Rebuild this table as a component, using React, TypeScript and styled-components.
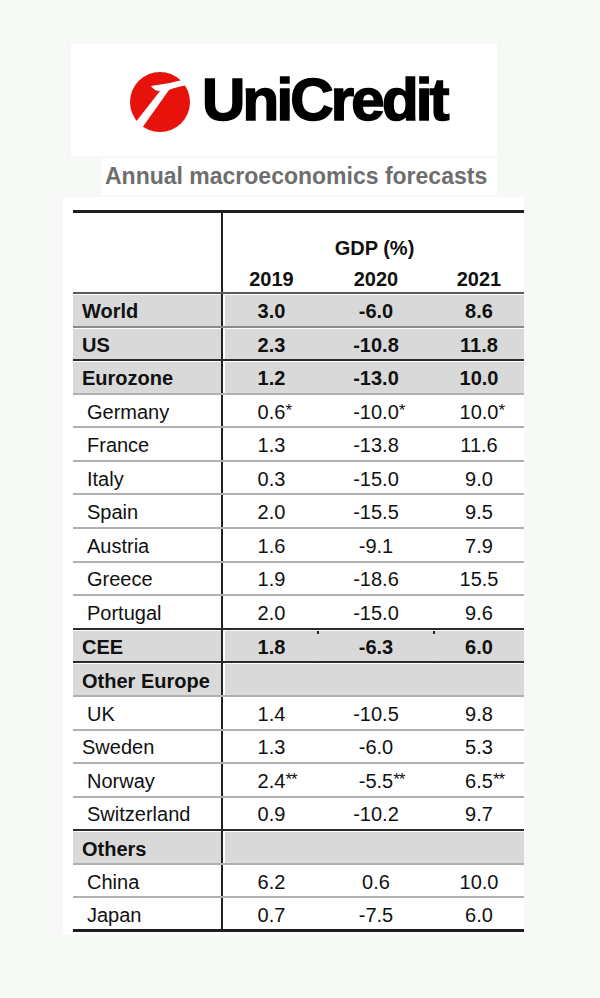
import React from "react";
import styled, { createGlobalStyle, css } from "styled-components";

const GlobalStyle = createGlobalStyle`
  body {
    margin: 0;
    background: #f7f9f7;
    font-family: "Liberation Sans", Arial, sans-serif;
    color: #111;
  }
`;

const Page = styled.div`
  display: flex;
  flex-direction: column;
  align-items: flex-start;
  gap: 2px;
  padding-top: 44px;
  min-height: 998px;
  box-sizing: border-box;
  background: #f7f9f7;
`;

const LogoBox = styled.div`
  margin-left: 71px;
  width: 426px;
  height: 112px;
  background: #fff;
  display: flex;
  align-items: center;
  padding-left: 58px;
  gap: 11px;
  box-sizing: border-box;
`;

const LogoMark = styled.svg`
  width: 62px;
  height: 62px;
  margin-top: 4px;
  flex-shrink: 0;
`;

const LogoText = styled.span`
  font-size: 60px;
  line-height: 60px;
  font-weight: 700;
  letter-spacing: -2.8px;
  color: #000;
  -webkit-text-stroke: 1.6px #000;
`;

const Subtitle = styled.div`
  margin-left: 102px;
  width: 395px;
  height: 37px;
  background: #fff;
  padding-left: 3px;
  box-sizing: border-box;
  font-size: 23px;
  line-height: 37px;
  font-weight: 700;
  color: #6e6e6e;
`;

const TableBox = styled.div`
  margin-left: 63px;
  width: 461px;
  background: #fff;
  padding: 13px 0 3px 10px;
  box-sizing: border-box;
`;

const Table = styled.div`
  border-top: 3px solid #1e1e1e;
  font-size: 20px;
`;

const Header = styled.div`
  display: flex;
  height: 81px;
  box-sizing: border-box;
  border-bottom: 2px solid #5a5a5a;
`;

const Blank = styled.div`
  width: 148px;
`;

const HeaderData = styled.div`
  flex: 1;
  display: flex;
  flex-direction: column;
  justify-content: flex-end;
  border-left: 2px solid #222;
  padding-left: 2px;
  padding-bottom: 1px;
`;

const Title = styled.div`
  text-align: center;
  font-weight: 700;
  line-height: 24px;
  margin-bottom: 4px;
`;

const Years = styled.div`
  display: flex;
  line-height: 24px;
`;

const lines = {
  thin: "2px solid #b0b0b0",
  mid: "2px solid #8a8a8a",
  dark: "2px solid #2a2a2a",
  end: "3px solid #1e1e1e",
};

type Line = keyof typeof lines;

const Row = styled.div<{ $line: Line }>`
  display: flex;
  height: 33.58px;
  box-sizing: border-box;
  border-bottom: ${(p) => lines[p.$line]};
`;

const Label = styled.div<{ $shade?: boolean; $bold?: boolean; $indent?: boolean }>`
  width: 148px;
  display: flex;
  align-items: center;
  padding: 3px 0 0 ${(p) => (p.$indent ? 14 : 9)}px;
  box-sizing: border-box;
  font-weight: ${(p) => (p.$bold ? 700 : 400)};
  background: ${(p) => (p.$shade ? "#d9d9d9" : "transparent")};
  border-top: ${(p) => (p.$shade ? "1px solid #fff" : "none")};
`;

const Data = styled.div`
  flex: 1;
  display: flex;
  border-left: 2px solid #222;
  padding-left: 2px;
`;

const Cell = styled.div<{ $w: number; $shade?: boolean; $bold?: boolean; $tick?: boolean }>`
  position: relative;
  width: ${(p) => p.$w}px;
  display: flex;
  align-items: center;
  justify-content: center;
  padding-top: 3px;
  box-sizing: border-box;
  font-weight: ${(p) => (p.$bold ? 700 : 400)};
  background: ${(p) => (p.$shade ? "#d9d9d9" : "transparent")};
  border-top: ${(p) => (p.$shade ? "1px solid #fff" : "none")};
  ${(p) =>
    p.$tick &&
    css`
      &::before,
      &::after {
        content: "";
        position: absolute;
        left: -1px;
        width: 2px;
        height: 3px;
        background: #222;
      }
      &::before {
        top: 0;
      }
      &::after {
        bottom: -4px;
      }
    `}
`;

const Num = styled.span`
  position: relative;
`;

const Note = styled.span`
  position: absolute;
  left: 100%;
  top: 0;
  font-size: 17px;
  letter-spacing: -1px;
`;

const widths = [93, 116, 90];

type RowData = {
  label: string;
  vals?: string[];
  bold?: boolean;
  shade?: boolean;
  indent?: boolean;
  line: Line;
  ticks?: boolean;
};

const rows: RowData[] = [
  { label: "World", vals: ["3.0", "-6.0", "8.6"], bold: true, shade: true, line: "mid" },
  { label: "US", vals: ["2.3", "-10.8", "11.8"], bold: true, shade: true, line: "dark" },
  { label: "Eurozone", vals: ["1.2", "-13.0", "10.0"], bold: true, shade: true, line: "thin" },
  { label: "Germany", vals: ["0.6*", "-10.0*", "10.0*"], indent: true, line: "thin" },
  { label: "France", vals: ["1.3", "-13.8", "11.6"], indent: true, line: "thin" },
  { label: "Italy", vals: ["0.3", "-15.0", "9.0"], indent: true, line: "thin" },
  { label: "Spain", vals: ["2.0", "-15.5", "9.5"], indent: true, line: "thin" },
  { label: "Austria", vals: ["1.6", "-9.1", "7.9"], indent: true, line: "thin" },
  { label: "Greece", vals: ["1.9", "-18.6", "15.5"], indent: true, line: "thin" },
  { label: "Portugal", vals: ["2.0", "-15.0", "9.6"], indent: true, line: "dark" },
  { label: "CEE", vals: ["1.8", "-6.3", "6.0"], bold: true, shade: true, line: "dark", ticks: true },
  { label: "Other Europe", bold: true, shade: true, line: "thin" },
  { label: "UK", vals: ["1.4", "-10.5", "9.8"], indent: true, line: "thin" },
  { label: "Sweden", vals: ["1.3", "-6.0", "5.3"], line: "thin" },
  { label: "Norway", vals: ["2.4**", "-5.5**", "6.5**"], indent: true, line: "thin" },
  { label: "Switzerland", vals: ["0.9", "-10.2", "9.7"], indent: true, line: "dark" },
  { label: "Others", bold: true, shade: true, line: "thin" },
  { label: "China", vals: ["6.2", "0.6", "10.0"], indent: true, line: "thin" },
  { label: "Japan", vals: ["0.7", "-7.5", "6.0"], indent: true, line: "end" },
];

function Value({ v }: { v: string }) {
  const m = v.match(/^([^*]*)(\**)$/);
  const num = m ? m[1] : v;
  const stars = m ? m[2] : "";
  return (
    <Num>
      {num}
      {stars && <Note>{stars}</Note>}
    </Num>
  );
}

function Logo() {
  return (
    <LogoBox>
      <LogoMark viewBox="0 0 62 62">
        <circle cx="31" cy="31" r="30" fill="#e8120c" />
        <path
          d="M22 15 Q40 13 57 8 L59 14 Q47 16 40 19 L13 57 L6 52 L31 20 Q25 20 22 15 Z"
          fill="#fff"
        />
      </LogoMark>
      <LogoText>UniCredit</LogoText>
    </LogoBox>
  );
}

export default function App() {
  return (
    <>
      <GlobalStyle />
      <Page>
        <Logo />
        <Subtitle>Annual macroeconomics forecasts</Subtitle>
        <TableBox>
          <Table>
            <Header>
              <Blank />
              <HeaderData>
                <Title>GDP (%)</Title>
                <Years>
                  {["2019", "2020", "2021"].map((y, i) => (
                    <Cell key={y} $w={widths[i]} $bold>
                      {y}
                    </Cell>
                  ))}
                </Years>
              </HeaderData>
            </Header>
            {rows.map((r) => (
              <Row key={r.label} $line={r.line}>
                <Label $shade={r.shade} $bold={r.bold} $indent={r.indent}>
                  {r.label}
                </Label>
                <Data>
                  {widths.map((w, i) => (
                    <Cell
                      key={i}
                      $w={w}
                      $shade={r.shade}
                      $bold={r.bold}
                      $tick={r.ticks && i > 0}
                    >
                      {r.vals && <Value v={r.vals[i]} />}
                    </Cell>
                  ))}
                </Data>
              </Row>
            ))}
          </Table>
        </TableBox>
      </Page>
    </>
  );
}
